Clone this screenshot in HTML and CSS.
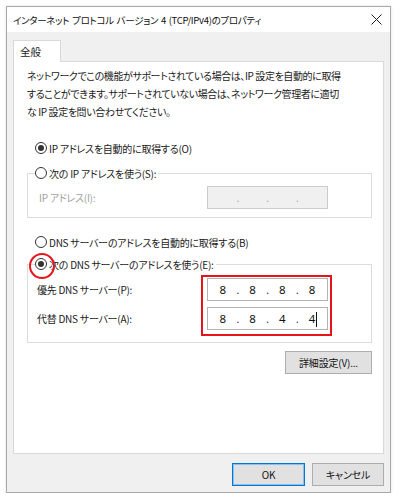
FILE: index.html
```html
<!DOCTYPE html>
<html lang="ja">
<head>
<meta charset="utf-8">
<title>インターネット プロトコル バージョン 4 (TCP/IPv4)のプロパティ</title>
<link rel="stylesheet" href="styles.css">
</head>
<body>
<div class="window">
  <div class="titlebar">
    <span class="title">インターネット プロトコル バージョン 4 (TCP/IPv4)のプロパティ</span>
    <svg class="close" width="11" height="11" viewBox="0 0 11 11"><path d="M0.5 0.5 L10.5 10.5 M10.5 0.5 L0.5 10.5" stroke="#222" stroke-width="1" fill="none"/></svg>
  </div>
  <div class="client">
    <div class="tabs"><div class="tab">全般</div></div>
    <div class="panel">
      <p class="desc">ネットワークでこの機能がサポートされている場合は、IP 設定を自動的に取得<br>することができます。サポートされていない場合は、ネットワーク管理者に適切<br>な IP 設定を問い合わせてください。</p>
      <div class="radio-row first"><span class="radio checked"></span><span>IP アドレスを自動的に取得する(O)</span></div>
      <fieldset class="group g1">
        <legend><span class="radio"></span><span>次の IP アドレスを使う(S):</span></legend>
        <div class="grid">
          <span class="lbl row1 disabled">IP アドレス(I):</span>
          <div class="ipbox row1 off"><span class="seg"></span><span class="dot">.</span><span class="seg"></span><span class="dot">.</span><span class="seg"></span><span class="dot">.</span><span class="seg"></span></div>
        </div>
      </fieldset>
      <div class="radio-row second"><span class="radio"></span><span>DNS サーバーのアドレスを自動的に取得する(B)</span></div>
      <fieldset class="group g2">
        <legend><span class="radio checked marked"></span><span>次の DNS サーバーのアドレスを使う(E):</span></legend>
        <div class="grid">
          <span class="lbl row1">優先 DNS サーバー(P):</span>
          <div class="ipbox row1"><span class="seg">8</span><span class="dot">.</span><span class="seg">8</span><span class="dot">.</span><span class="seg">8</span><span class="dot">.</span><span class="seg">8</span></div>
          <span class="lbl row2">代替 DNS サーバー(A):</span>
          <div class="ipbox row2"><span class="seg">8</span><span class="dot">.</span><span class="seg">8</span><span class="dot">.</span><span class="seg">4</span><span class="dot">.</span><span class="seg">4<span class="caret"></span></span></div>
          <div class="highlight"></div>
        </div>
      </fieldset>
      <div class="adv-row"><button class="btn adv">詳細設定(V)...</button></div>
    </div>
    <div class="footer">
      <button class="btn ok">OK</button>
      <button class="btn cancel">キャンセル</button>
    </div>
  </div>
</div>
</body>
</html>
```
FILE: styles.css
```css
* { box-sizing: border-box; }
html, body { margin: 0; padding: 0; background: #fff; }
body {
  font-family: "Noto Sans CJK JP", "Noto Sans", sans-serif;
  font-size: 10px;
  letter-spacing: -0.25px;
  font-feature-settings: "palt";
  color: #1a1a1a;
}
.window {
  margin: 6px 0 0 6px;
  width: 385px;
  height: 487px;
  border: 1px solid #a8a8a8;
  box-shadow: 0 0 3px rgba(0,0,0,0.12);
  display: flex;
  flex-direction: column;
}
.titlebar {
  height: 25px;
  background: #fff;
  display: flex;
  align-items: center;
  padding-left: 6px;
}
.title { font-size: 9.5px; letter-spacing: -0.3px; word-spacing: 1px; color: #111; white-space: nowrap; }
.close { margin-left: auto; margin-right: 8px; }
.client {
  flex: 1;
  background: #f0f0f0;
  padding: 8px 6px 6px 6px;
  display: flex;
  flex-direction: column;
}
.tabs { display: flex; }
.tab {
  width: 48px;
  height: 22px;
  margin-bottom: -1px;
  background: #fff;
  border: 1px solid #d9d9d9;
  border-bottom: none;
  padding-left: 6px;
  line-height: 21px;
  font-size: 10.5px;
  letter-spacing: 0;
  position: relative;
  z-index: 1;
}
.panel {
  flex: 1;
  background: #fff;
  border: 1px solid #d9d9d9;
  padding: 5px 0 0 13px;
  display: flex;
  flex-direction: column;
}
.desc { margin: 0; line-height: 18px; white-space: nowrap; letter-spacing: -0.4px; }
.radio-row {
  display: flex;
  align-items: center;
  height: 18px;
  margin-left: 8px;
}
.radio-row.first { margin-top: 18px; }
.radio-row.second { margin-top: 15px; }
.radio {
  width: 12px;
  height: 12px;
  border: 1px solid #333;
  border-radius: 50%;
  background: #fff;
  margin-right: 2px;
  flex: none;
  display: flex;
  align-items: center;
  justify-content: center;
  position: relative;
}
.radio.checked::before {
  content: "";
  width: 6px;
  height: 6px;
  border-radius: 50%;
  background: #333;
}
.radio.marked::after {
  content: "";
  position: absolute;
  left: -7px;
  top: -6px;
  width: 22px;
  height: 22px;
  border: 2px solid #e8141b;
  border-radius: 50%;
}
.group {
  margin: 7px 11px 0 0;
  border: 1px solid #dcdcdc;
  padding: 4px 0 8px 7px;
  min-width: 0;
}
.group legend {
  padding: 0 2px 0 0;
  display: flex;
  align-items: center;
  height: 18px;
}
.g2 { margin-top: 4px; padding: 5px 0 12px 7px; }
.grid {
  display: grid;
  grid-template-columns: 168px 121px;
  grid-template-rows: 23px;
  row-gap: 6px;
  align-items: center;
  margin-left: 4px;
}
.g2 .grid { margin-left: 2px; grid-template-columns: 170px 121px; grid-template-rows: 23px 23px; }
.lbl { white-space: nowrap; grid-column: 1; }
.ipbox { grid-column: 2; }
.row1 { grid-row: 1; }
.row2 { grid-row: 2; }
.disabled { color: #a0a0a0; }
.ipbox {
  height: 23px;
  border: 1px solid #b4b4b4;
  background: #fff;
  display: flex;
  align-items: center;
  font-family: "Noto Sans", sans-serif;
  font-size: 11.5px;
  letter-spacing: 0;
  color: #111;
}
.ipbox.off { background: #f0f0f0; border-color: #cccccc; color: #a0a0a0; }
.seg { flex: 1; text-align: center; position: relative; }
.dot { width: 0; display: flex; justify-content: center; font-size: 10px; }
.caret {
  position: absolute;
  top: 1px;
  margin-left: 1px;
  width: 1px;
  height: 15px;
  background: #111;
}
.highlight {
  grid-column: 2;
  grid-row: 1 / span 2;
  margin: -3px -4px -6px -6px;
  align-self: stretch;
  border: 2px solid #e8141b;
  pointer-events: none;
}
.adv-row {
  display: flex;
  justify-content: flex-end;
  margin: 8px 11px 0 0;
}
.btn {
  font-family: inherit;
  font-size: 10px;
  letter-spacing: -0.2px;
  font-feature-settings: "palt";
  color: #111;
  background: #e1e1e1;
  border: 1px solid #adadad;
  height: 23px;
  padding: 0;
}
.adv { width: 87px; }
.footer {
  display: flex;
  justify-content: flex-end;
  gap: 7px;
  margin-top: 9px;
}
.ok { width: 73px; border-color: #0078d7; box-shadow: inset 0 0 0 1px #8cc0ea; }
.cancel { width: 72px; }
```
